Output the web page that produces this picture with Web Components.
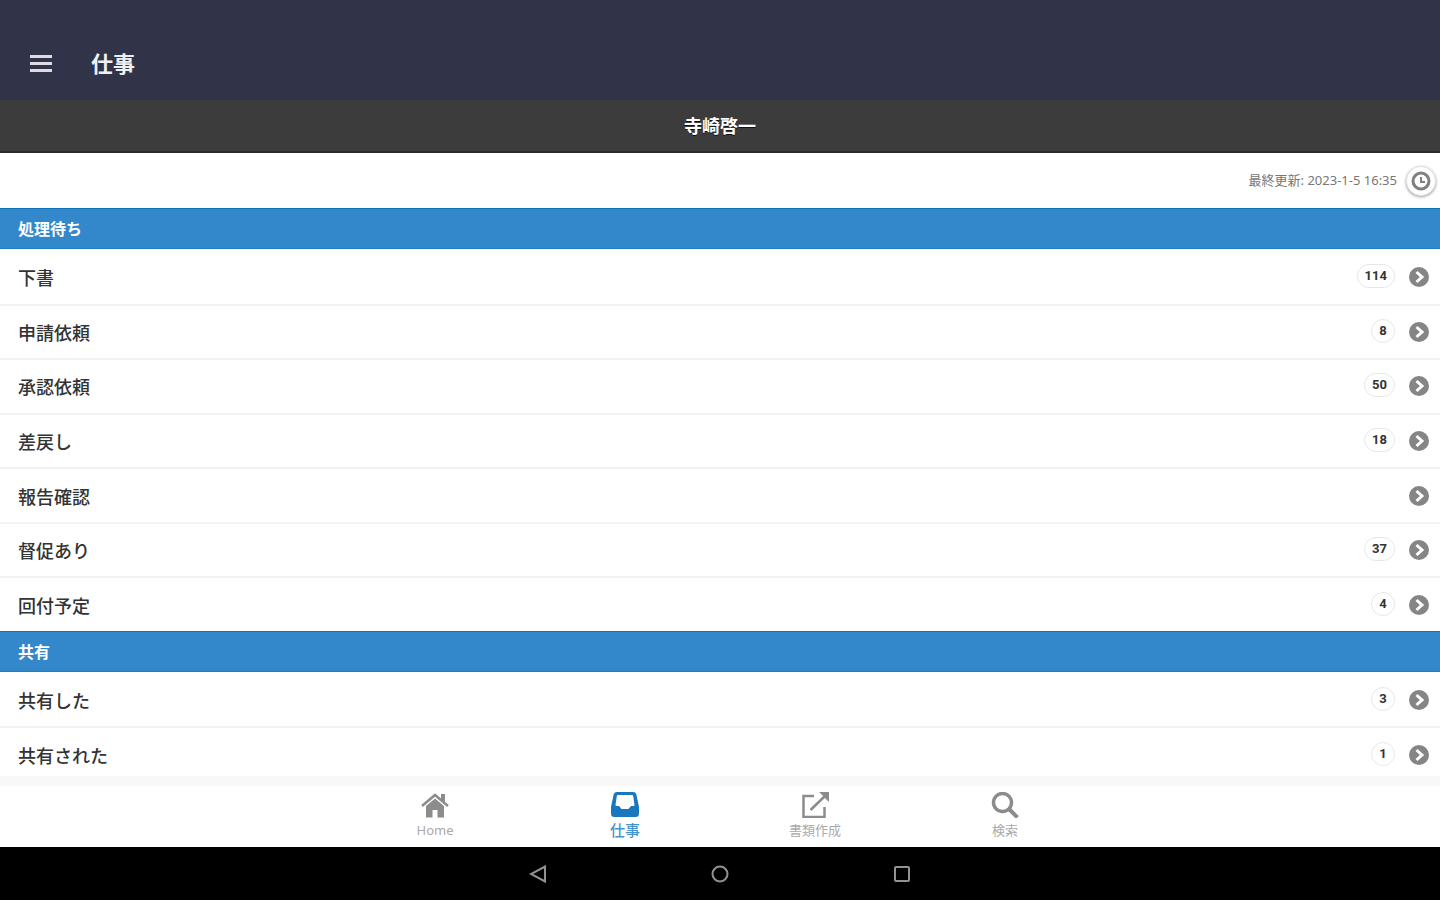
<!DOCTYPE html>
<html lang="ja">
<head>
<meta charset="utf-8">
<meta name="viewport" content="width=device-width, initial-scale=1">
<title>仕事</title>
<style>
  html,
  body {
    margin: 0;
    height: 100%;
  }

  body {
    display: flex;
    flex-direction: column;
    background: #fff;
    color: #333;
    font-family: Roboto, "Noto Sans CJK JP", sans-serif;
    --color--primary: #3388cc;
    --color--muted: #8c8c8c;
    --font--small: "Noto Sans", "Noto Sans CJK JP", sans-serif;
  }

  main {
    flex: 1;
    display: flex;
    flex-direction: column;
  }
</style>
</head>
<body>
  <app-header>仕事</app-header>
  <user-bar>寺崎啓一</user-bar>
  <main>
    <update-bar>最終更新: 2023-1-5 16:35</update-bar>
    <work-section heading="処理待ち" style="--rows: 7">
      <work-item count="114">下書</work-item>
      <work-item count="8">申請依頼</work-item>
      <work-item count="50">承認依頼</work-item>
      <work-item count="18">差戻し</work-item>
      <work-item>報告確認</work-item>
      <work-item count="37">督促あり</work-item>
      <work-item count="4">回付予定</work-item>
    </work-section>
    <work-section heading="共有" style="--rows: 2">
      <work-item count="3">共有した</work-item>
      <work-item count="1">共有された</work-item>
    </work-section>
  </main>
  <tab-bar>
    <tab-item icon="home">Home</tab-item>
    <tab-item icon="inbox" active>仕事</tab-item>
    <tab-item icon="compose">書類作成</tab-item>
    <tab-item icon="search">検索</tab-item>
  </tab-bar>
  <system-nav></system-nav>

<script>
class AppHeader extends HTMLElement {
  constructor() {
    super();
    this.attachShadow({ mode: 'open' });
    this.shadowRoot.innerHTML = `
      <style>
        :host {
          display: block;
          background: #313348;
          color: #f0f0f0;
        }

        header {
          display: flex;
          align-items: center;
          gap: 38px;
          height: 72px;
          padding: 28px 29px 0;
        }

        button {
          display: flex;
          padding: 0;
          border: 0;
          background: none;
          color: #dcdce2;
        }

        h1 {
          margin: 0;
          padding-top: 2px;
          font-size: 22px;
          line-height: 32px;
        }
      </style>
      <header>
        <button type="button" aria-label="メニュー">
          <svg width="24" height="20" viewBox="0 0 24 20" fill="none" stroke="currentColor" stroke-width="3">
            <path d="M1 2.500h22M1 9.500h22M1 16.500h22"/>
          </svg>
        </button>
        <h1><slot></slot></h1>
      </header>
    `;
  }
}

class UserBar extends HTMLElement {
  constructor() {
    super();
    this.attachShadow({ mode: 'open' });
    this.shadowRoot.innerHTML = `
      <style>
        :host {
          display: block;
          padding: 14px 16px 11px;
          border-bottom: 2px solid #2b2b2b;
          background: #3c3c3c;
          color: #fff;
          text-align: center;
        }

        h2 {
          margin: 0;
          font-size: 18px;
          line-height: 26px;
          text-shadow: 0 1px 0 #111;
        }
      </style>
      <h2><slot></slot></h2>
    `;
  }
}

class UpdateBar extends HTMLElement {
  constructor() {
    super();
    this.attachShadow({ mode: 'open' });
    this.shadowRoot.innerHTML = `
      <style>
        :host {
          display: flex;
          flex: none;
          align-items: center;
          justify-content: flex-end;
          gap: 9px;
          height: 55px;
          padding-right: 4px;
          color: #777;
          font-family: var(--font--small);
          font-size: 13px;
        }

        span {
          padding-bottom: 2px;
        }

        button {
          display: flex;
          align-items: center;
          justify-content: center;
          width: 30px;
          height: 30px;
          padding: 0;
          border: 1px solid #e4e4e4;
          border-radius: 50%;
          background: #fff;
          box-shadow: 0 1px 3px rgba(0, 0, 0, 0.4);
          color: #808080;
        }

        svg {
          flex: none;
        }
      </style>
      <span><slot></slot></span>
      <button type="button" aria-label="更新">
        <svg width="20" height="20" viewBox="0 0 20 20" fill="none" stroke="currentColor">
          <circle cx="10" cy="10" r="8" stroke-width="3"/>
          <path d="M10 6v5h4" stroke-width="2"/>
        </svg>
      </button>
    `;
  }
}

class WorkSection extends HTMLElement {
  constructor() {
    super();
    this.attachShadow({ mode: 'open' });
    this.shadowRoot.innerHTML = `
      <style>
        :host {
          display: flex;
          flex-direction: column;
          flex: var(--rows, 1) 0 auto;
        }

        h3 {
          margin: 0;
          padding: 9px 18px 7px;
          border-top: 1px solid #1272b8;
          border-bottom: 1px solid #1f7ec4;
          background: var(--color--primary);
          color: #fff;
          font-size: 16px;
          line-height: 23px;
        }

        .items {
          display: flex;
          flex-direction: column;
          flex: 1;
        }

        ::slotted(:first-child) {
          border-color: transparent;
        }
      </style>
      <h3></h3>
      <div class="items"><slot></slot></div>
    `;
  }

  connectedCallback() {
    this.shadowRoot.querySelector('h3').textContent = this.getAttribute('heading');
  }
}

class WorkItem extends HTMLElement {
  constructor() {
    super();
    this.attachShadow({ mode: 'open' });
    this.shadowRoot.innerHTML = `
      <style>
        :host {
          display: flex;
          flex: 1 0 50px;
          box-sizing: border-box;
          border-top: 2px solid #f2f2f2;
        }

        a {
          display: flex;
          flex: 1;
          align-items: center;
          gap: 14px;
          padding: 0 11px 0 18px;
          color: #333;
          text-decoration: none;
        }

        .label {
          flex: 1;
          font-size: 18px;
          font-weight: 500;
        }

        .count {
          box-sizing: border-box;
          min-width: 24px;
          margin-bottom: 2px;
          padding: 0 7px;
          border: 1px solid #e6e8e8;
          border-radius: 12px;
          color: #333;
          font-size: 13px;
          font-weight: 700;
          line-height: 22px;
          text-align: center;
        }

        svg {
          flex: none;
        }
      </style>
      <a href="#">
        <span class="label"><slot></slot></span>
        <svg width="20" height="20" viewBox="0 0 20 20">
          <circle cx="10" cy="10" r="10" fill="#858585"/>
          <path d="M7.500 5l5.500 5l-5.500 5" fill="none" stroke="#fff" stroke-width="3"/>
        </svg>
      </a>
    `;
  }

  connectedCallback() {
    if (this.hasAttribute('count')) {
      const count = document.createElement('span');
      count.className = 'count';
      count.textContent = this.getAttribute('count');
      this.shadowRoot.querySelector('.label').after(count);
    }
  }
}

class TabBar extends HTMLElement {
  constructor() {
    super();
    this.attachShadow({ mode: 'open' });
    // the bar covers the bottom edge of the list
    this.shadowRoot.innerHTML = `
      <style>
        :host {
          display: block;
          margin-top: -5px;
          border-top: 10px solid #f8f8f8;
          background: #fff;
        }

        nav {
          display: grid;
          grid-template-columns: repeat(4, 190px);
          justify-content: center;
          height: 61px;
        }
      </style>
      <nav><slot></slot></nav>
    `;
  }
}

const TAB_ICONS = {
  home: `
    <path fill="currentColor" d="M14 6.500L23 14v11.500h-6.500V18h-5v7.500H5V14z"/>
    <path fill="none" stroke="currentColor" stroke-width="2.500" d="M1 14L14 3l13 11"/>
    <path fill="currentColor" d="M20 2h4v9l-4-3.500z"/>`,
  inbox: `
    <path fill="currentColor" fill-rule="evenodd" d="M6 0h16q3 0 3.500 3L28 15v6.500q0 3.500-3.500 3.500h-21Q0 25 0 21.500V15L2.500 3Q3 0 6 0zM7 3q-1 0-1.200 1L4.500 13q0 1 1 1H8l2.500 3h7l2.500-3h2.500q1 0 1-1L22.200 4Q22 3 21 3z"/>`,
  compose: `
    <path fill="none" stroke="currentColor" stroke-width="2.500" d="M13 4H2.500v21h21V15M9.500 18L24 4"/>
    <path fill="currentColor" d="M18 0h10v10l-3.300-3.300l-3.400-3.400z"/>`,
  search: `
    <circle cx="11.500" cy="10.500" r="9" fill="none" stroke="currentColor" stroke-width="3.500"/>
    <path fill="none" stroke="currentColor" stroke-width="4" d="M18 17l8.500 8.500"/>`
};

class TabItem extends HTMLElement {
  constructor() {
    super();
    this.attachShadow({ mode: 'open' });
    this.shadowRoot.innerHTML = `
      <style>
        :host {
          display: block;
          color: var(--color--muted);
          font-family: var(--font--small);
        }

        :host([active]) {
          color: #1a76bd;
        }

        a {
          display: flex;
          flex-direction: column;
          align-items: center;
          gap: 2px;
          padding-top: 6px;
          color: inherit;
          text-decoration: none;
        }

        span {
          color: #aaa;
          font-size: 13px;
          line-height: 20px;
        }

        :host([active]) span {
          color: #4794cc;
          font-size: 15px;
          font-weight: 500;
        }
      </style>
      <a href="#">
        <svg width="28" height="26" viewBox="0 0 28 26"></svg>
        <span><slot></slot></span>
      </a>
    `;
  }

  connectedCallback() {
    this.shadowRoot.querySelector('svg').innerHTML = TAB_ICONS[this.getAttribute('icon')];
    if (this.hasAttribute('active')) {
      this.shadowRoot.querySelector('a').setAttribute('aria-current', 'page');
    }
  }
}

class SystemNav extends HTMLElement {
  constructor() {
    super();
    this.attachShadow({ mode: 'open' });
    this.shadowRoot.innerHTML = `
      <style>
        :host {
          display: grid;
          grid-template-columns: repeat(3, 182px);
          justify-content: center;
          height: 53px;
          background: #000;
        }

        button {
          display: flex;
          align-items: center;
          justify-content: center;
          padding: 0;
          border: 0;
          background: none;
          color: #929292;
        }

        svg {
          fill: none;
          stroke: currentColor;
          stroke-width: 2;
        }
      </style>
      <button type="button" aria-label="戻る">
        <svg width="18" height="18" viewBox="0 0 18 18"><path d="M16 1.500v15L2 9z"/></svg>
      </button>
      <button type="button" aria-label="ホーム">
        <svg width="18" height="18" viewBox="0 0 18 18"><circle cx="9" cy="9" r="7.500"/></svg>
      </button>
      <button type="button" aria-label="アプリ履歴">
        <svg width="18" height="18" viewBox="0 0 18 18"><rect x="2" y="2" width="14" height="14" rx="1"/></svg>
      </button>
    `;
  }
}

customElements.define('app-header', AppHeader);
customElements.define('user-bar', UserBar);
customElements.define('update-bar', UpdateBar);
customElements.define('work-section', WorkSection);
customElements.define('work-item', WorkItem);
customElements.define('tab-bar', TabBar);
customElements.define('tab-item', TabItem);
customElements.define('system-nav', SystemNav);
</script>
</body>
</html>
